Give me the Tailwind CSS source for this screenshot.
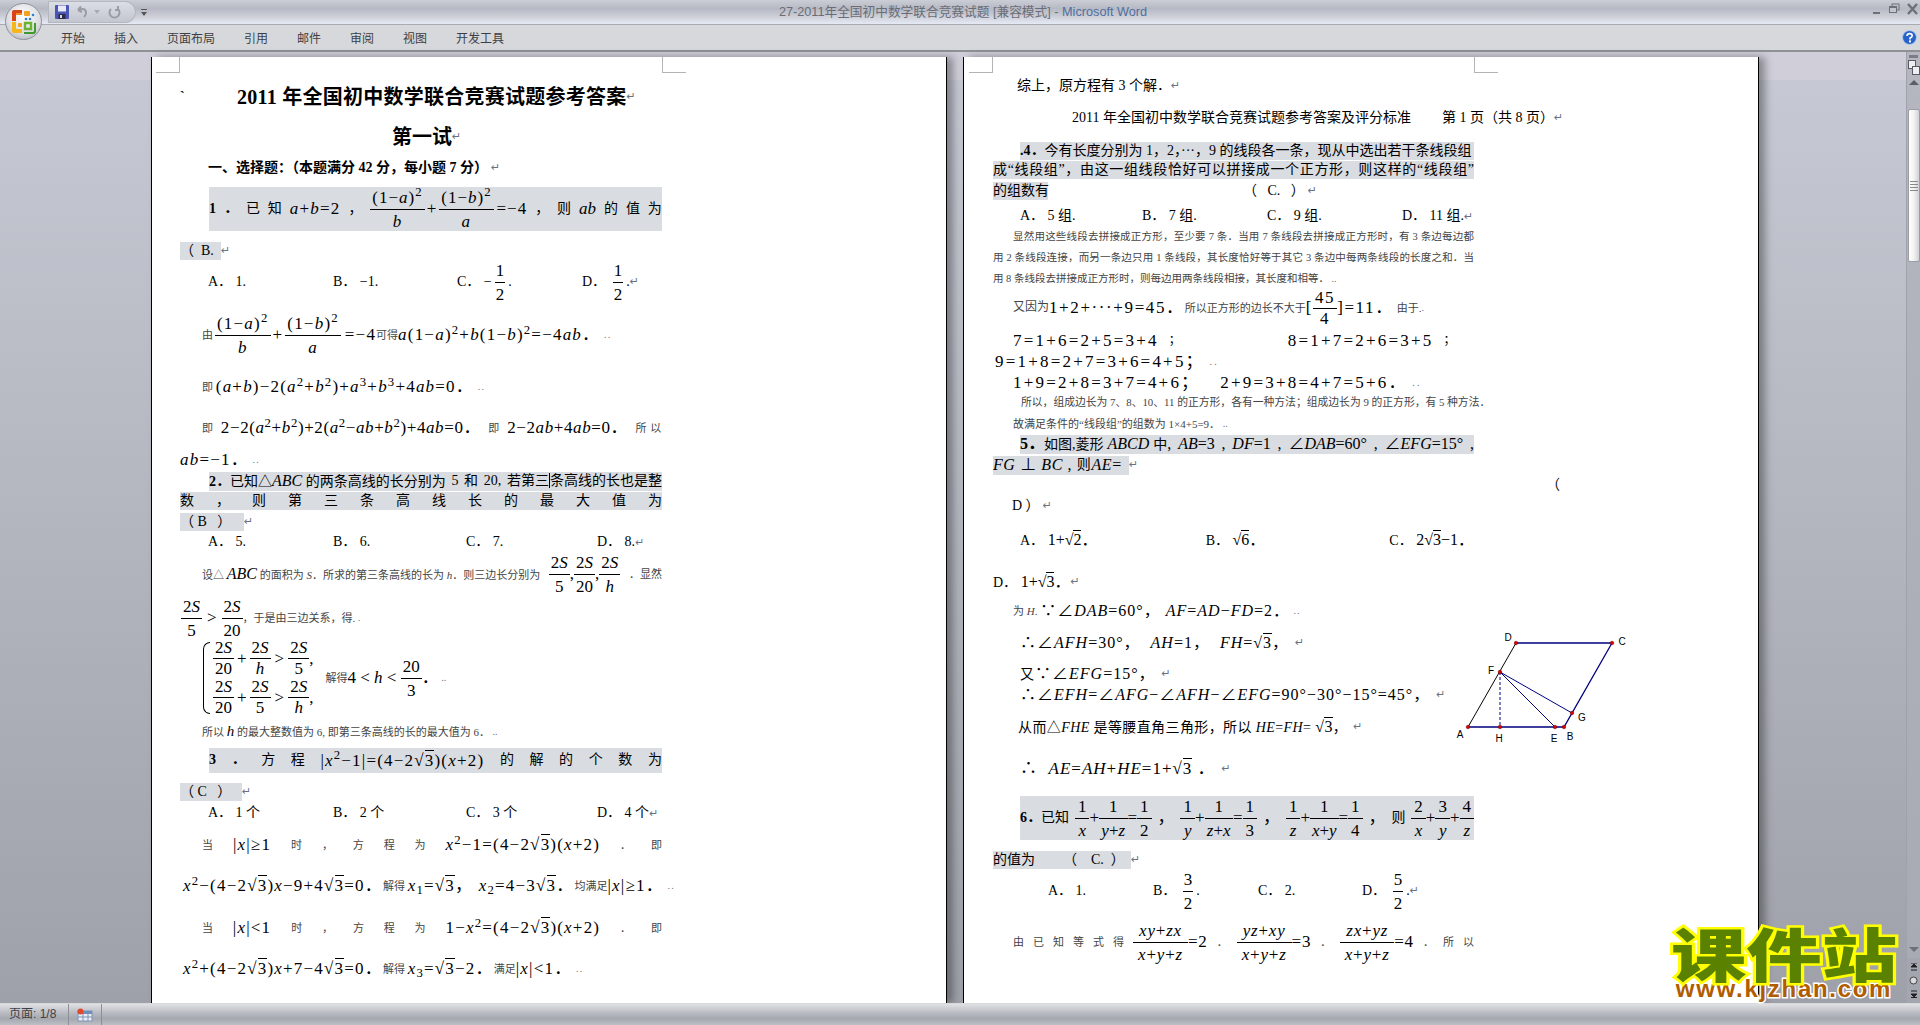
<!doctype html>
<html lang="zh-CN">
<head>
<meta charset="utf-8">
<title>27-2011年全国初中数学联合竞赛试题 [兼容模式] - Microsoft Word</title>
<script src="https://cdn.jsdelivr.net/npm/@tailwindcss/browser@4"></script>
</head>
<body class="relative w-[1920px] h-[1025px] overflow-hidden flex flex-col text-black leading-[1.15] font-['Liberation_Serif','Noto_Sans_CJK_SC',serif]">

<!-- Title bar -->
<header class="relative shrink-0 h-[25px] border-b border-[#a8abb3] flex items-center justify-center bg-[linear-gradient(#ccced6,#b6b9c3_35%,#c9ccd5_65%,#e6eaf4)] font-['Liberation_Sans','Noto_Sans_CJK_SC',sans-serif] text-[12.7px] text-[#6a6d76]">
  <span class="whitespace-pre ml-[6px]">27-2011年全国初中数学联合竞赛试题 [兼容模式] - <span class="text-[#4f6f9f]">Microsoft Word</span></span>
  <!-- quick access toolbar -->
  <div class="absolute left-[48px] top-[1px] w-[88px] h-[22px] rounded-r-full rounded-l-[8px] border border-[#b4b7c0] bg-[linear-gradient(#dcdee5,#c3c6cf)] flex items-center gap-[8px] pl-[6px]">
    <svg width="14" height="14" viewBox="0 0 14 14"><rect width="14" height="14" rx="1" fill="#4a55b8"/><rect x="3" y="0.5" width="8" height="6" fill="#e8e9f4"/><rect x="3.5" y="9" width="7" height="5" fill="#2c2c46"/><rect x="5" y="10" width="2" height="3" fill="#d8d8e4"/></svg>
    <svg width="12" height="14" viewBox="0 0 12 14"><path d="M1 5 L4 1.5 M1 5 L5 7 M1.5 5 Q9 2 9 8 Q9 10 7 12" fill="none" stroke="#9a9da6" stroke-width="2"/></svg>
    <svg width="6" height="4" viewBox="0 0 6 4" class="-ml-[3px]"><path d="M0 0H6L3 4Z" fill="#a7aab3"/></svg>
    <svg width="13" height="14" viewBox="0 0 13 14"><path d="M3 4 A5 5 0 1 0 10 4 M10 1 V5 H7" fill="none" stroke="#9a9da6" stroke-width="2"/></svg>
  </div>
  <svg class="absolute left-[141px] top-[9px]" width="6" height="7" viewBox="0 0 6 7"><rect width="6" height="1" fill="#555"/><path d="M0 3H6L3 7Z" fill="#555"/></svg>
  <!-- window buttons -->
  <div class="absolute right-[2px] top-[3px] flex items-start gap-[7px]">
    <svg width="11" height="12" viewBox="0 0 11 12"><rect x="2" y="9" width="7" height="2" fill="#6c7079"/></svg>
    <svg width="11" height="12" viewBox="0 0 11 12"><rect x="3" y="1" width="7" height="6" fill="none" stroke="#6c7079"/><rect x="0.5" y="3.5" width="7" height="6" fill="#c3c6cf" stroke="#6c7079"/><rect x="1" y="3" width="6" height="2" fill="#6c7079"/></svg>
    <svg width="11" height="12" viewBox="0 0 11 12"><path d="M1 1 L10 11 M10 1 L1 11" stroke="#6c7079" stroke-width="2.4"/></svg>
  </div>
</header>

<!-- Ribbon tabs -->
<nav class="relative shrink-0 h-[27px] border-b-2 border-[#8e9196] bg-[#d6d8db] flex items-center gap-[29px] pl-[61px] font-['Noto_Sans_CJK_SC',sans-serif] text-[12px] text-[#3d3f44]">
  <span>开始</span><span>插入</span><span>页面布局</span><span>引用</span><span>邮件</span><span>审阅</span><span>视图</span><span>开发工具</span>
  <svg class="absolute left-[1902px] top-[5px]" width="15" height="15" viewBox="0 0 15 15"><circle cx="7.5" cy="7.5" r="7" fill="#2a63c8" stroke="#b9cdf0"/><path d="M5 6 Q5 3.6 7.6 3.6 Q10.2 3.6 10.2 5.7 Q10.2 7 8 8 V9.4" fill="none" stroke="#fff" stroke-width="1.6"/><rect x="7" y="10.4" width="2" height="2" fill="#fff"/></svg>
</nav>

<!-- Office button -->
<div class="absolute left-[5px] top-[3px] w-[37px] h-[37px] rounded-full border border-[#8f9299] bg-[radial-gradient(circle_at_50%_35%,#ffffff,#d9dbe0_60%,#a3a6ae)] flex items-center justify-center">
  <svg width="25" height="25" viewBox="0 0 25 25">
    <path d="M1 3 Q1 1 3 1 H11 V5 H5 V12 H1Z" fill="#d9431a"/>
    <rect x="5" y="4" width="6" height="2" fill="#f28b1e"/>
    <rect x="13" y="2" width="6" height="5" rx="1" fill="#f3a21f"/>
    <circle cx="15" cy="10" r="1.3" fill="#2c7ed0"/><circle cx="19" cy="10" r="1.3" fill="#2c7ed0"/><circle cx="22" cy="6" r="1.3" fill="#2c7ed0"/>
    <path d="M1 13 H5 V20 H11 V24 H3 Q1 24 1 22Z" fill="#f4b619"/>
    <rect x="7" y="14" width="4" height="4" rx="1" fill="#f6a11d"/>
    <path d="M14 14 H20 V20 H14Z" fill="none" stroke="#6bb22f" stroke-width="2.4"/>
    <path d="M13 24 H22 Q24 24 24 22 V14" fill="none" stroke="#3f9a2e" stroke-width="2"/>
  </svg>
</div>

<!-- Document area -->
<main class="relative flex-1 min-h-0 flex gap-[16px] pl-[151px] bg-[linear-gradient(#d0ced9_28px,#c6c9d3_28px,#9ea1a9)]">

  <!-- Page 1 -->
  <section class="relative mt-[5px] w-[796px] h-[946px] shrink-0 overflow-hidden bg-white border-x border-black shadow-[6px_0_8px_rgba(0,0,0,0.35)] pt-[20px] pl-[28px] pr-[284px] text-[14px]">
    <div class="absolute left-[4px] top-0 w-[24px] h-[16px] border-r border-b border-[#b4b4b4]"></div>
    <div class="absolute left-[510px] top-0 w-[24px] h-[16px] border-l border-b border-[#b4b4b4]"></div>

    <div class="flex items-center h-[40px] whitespace-pre text-[20px] font-bold"><span class="w-[57px] text-[14px]">`</span><span class="tracking-[0.25px]">2011 年全国初中数学联合竞赛试题参考答案</span><i class="not-italic font-normal text-[11px] text-gray-500 font-['DejaVu_Sans']">↵</i></div>
    <div class="flex items-center h-[40px] pl-[212px] whitespace-pre text-[20px] font-bold"><span>第一试</span><i class="not-italic font-normal text-[11px] text-gray-500 font-['DejaVu_Sans']">↵</i></div>
    <div class="flex items-center h-[22px] pl-[28px] whitespace-pre font-bold"><span>一、选择题：（本题满分 42 分，每小题 7 分）</span><i class="not-italic font-normal text-[11px] text-gray-500 font-['DejaVu_Sans'] ml-[3px]">↵</i></div>

    <div class="ml-[29px] mt-[8px] h-[44px] bg-[#d9dce1] flex items-center justify-between whitespace-pre">
      <b>1</b><b>．</b><span>已</span><span>知</span><span class="text-[17px] tracking-[1.2px]"><em>a</em>+<em>b</em>=2</span><span>，</span>
      <span class="flex items-center text-[17px] tracking-[1px]"><span class="inline-flex flex-col items-center"><span class="border-b border-black px-[2px] leading-[23px]">(1−<em>a</em>)<sup>2</sup></span><span class="leading-[23px]"><em>b</em></span></span><span class="mx-[2px]">+</span><span class="inline-flex flex-col items-center"><span class="border-b border-black px-[2px] leading-[23px]">(1−<em>b</em>)<sup>2</sup></span><span class="leading-[23px]"><em>a</em></span></span><span class="ml-[3px]">=−4</span></span>
      <span>，</span><span>则</span><span class="text-[17px]"><em>ab</em></span><span>的</span><span>值</span><span>为</span>
    </div>
    <div class="mt-[11px] h-[18px] flex items-center whitespace-pre"><span class="h-[18px] w-[41px] bg-[#d9dce1] flex items-center">（  B.</span><i class="not-italic text-[11px] text-gray-500 font-['DejaVu_Sans']">↵</i></div>

    <div class="h-[44px] pl-[28px] flex items-center whitespace-pre">
      <span class="w-[125px]">A． 1.</span><span class="w-[124px]">B． −1.</span>
      <span class="w-[125px] flex items-center">C． −<span class="inline-flex flex-col items-center text-[17px] mx-[3px]"><span class="border-b border-black px-[1px] leading-[23px]">1</span><span class="leading-[23px]">2</span></span>.</span>
      <span class="flex items-center">D． <span class="inline-flex flex-col items-center text-[17px] mx-[3px]"><span class="border-b border-black px-[1px] leading-[23px]">1</span><span class="leading-[23px]">2</span></span>.<i class="not-italic text-[11px] text-gray-500 font-['DejaVu_Sans']">↵</i></span>
    </div>

    <div class="mt-[9px] h-[44px] pl-[22px] flex items-center whitespace-pre text-[17px] tracking-[1.2px]">
      <span class="text-[11px] text-[#444] tracking-normal">由</span>
      <span class="inline-flex flex-col items-center ml-[2px]"><span class="border-b border-black px-[2px] leading-[23px]">(1−<em>a</em>)<sup>2</sup></span><span class="leading-[23px]"><em>b</em></span></span><span class="mx-[2px]">+</span><span class="inline-flex flex-col items-center"><span class="border-b border-black px-[2px] leading-[23px]">(1−<em>b</em>)<sup>2</sup></span><span class="leading-[23px]"><em>a</em></span></span>
      <span class="ml-[4px]">=−4</span><span class="text-[11px] text-[#444] tracking-normal">可得</span><span><em>a</em>(1−<em>a</em>)<sup>2</sup>+<em>b</em>(1−<em>b</em>)<sup>2</sup>=−4<em>ab</em>．</span><span class="text-[10px] text-gray-500"> ..</span>
    </div>

    <div class="mt-[10px] h-[40px] pl-[22px] flex items-center whitespace-pre text-[17px] tracking-[1.2px]"><span class="text-[11px] text-[#444] tracking-normal">即 </span><span>(<em>a</em>+<em>b</em>)−2(<em>a</em><sup>2</sup>+<em>b</em><sup>2</sup>)+<em>a</em><sup>3</sup>+<em>b</em><sup>3</sup>+4<em>ab</em>=0．</span><span class="text-[10px] text-gray-500"> ..</span></div>

    <div class="mt-[1px] h-[40px] pl-[22px] flex items-center justify-between whitespace-pre text-[17px] tracking-[0.6px]"><span class="text-[11px] text-[#444]">即</span><span>2−2(<em>a</em><sup>2</sup>+<em>b</em><sup>2</sup>)+2(<em>a</em><sup>2</sup>−<em>ab</em>+<em>b</em><sup>2</sup>)+4<em>ab</em>=0．</span><span class="text-[11px] text-[#444]">即</span><span>2−2<em>ab</em>+4<em>ab</em>=0．</span><span class="text-[11px] text-[#444]">所 以</span></div>

    <div class="h-[24px] flex items-center whitespace-pre text-[17px] tracking-[1.2px]"><span><em>ab</em>=−1．</span><span class="text-[10px] text-gray-500"> ..</span></div>

    <div class="ml-[29px] h-[19px] bg-[#d9dce1] flex items-center justify-between whitespace-pre"><span><b>2</b><b>．</b>已知△<em class="text-[16px]">ABC</em> 的两条高线的长分别为</span><span>5</span><span>和</span><span>20,</span><span>若第三<span class="border-l border-black">条</span>高线的长也是整</span></div>
    <div class="mt-[1px] h-[18px] bg-[#d9dce1] flex items-center justify-between"><span>数</span><span>，</span><span>则</span><span>第</span><span>三</span><span>条</span><span>高</span><span>线</span><span>长</span><span>的</span><span>最</span><span>大</span><span>值</span><span>为</span></div>
    <div class="mt-[3px] h-[18px] flex items-center whitespace-pre"><span class="h-[18px] w-[64px] bg-[#d9dce1] flex items-center">（ B   ）</span><i class="not-italic text-[11px] text-gray-500 font-['DejaVu_Sans']">↵</i></div>
    <div class="mt-[2px] h-[18px] pl-[28px] flex items-center whitespace-pre"><span class="w-[125px]">A． 5.</span><span class="w-[133px]">B． 6.</span><span class="w-[131px]">C． 7.</span><span>D． 8.<i class="not-italic text-[11px] text-gray-500 font-['DejaVu_Sans']">↵</i></span></div>

    <div class="mt-[1px] h-[44px] pl-[22px] flex items-center justify-between whitespace-pre text-[11px] text-[#444]">
      <span>设△ <em class="text-[16px] text-black">ABC</em> 的面积为 <em>S</em>．所求的第三条高线的长为 <em>h</em>．则三边长分别为</span>
      <span class="flex items-center text-[17px] text-black"><span class="inline-flex flex-col items-center"><span class="border-b border-black px-[2px] leading-[23px]">2<em>S</em></span><span class="leading-[23px]">5</span></span>,<span class="inline-flex flex-col items-center"><span class="border-b border-black px-[2px] leading-[23px]">2<em>S</em></span><span class="leading-[23px]">20</span></span>,<span class="inline-flex flex-col items-center"><span class="border-b border-black px-[2px] leading-[23px]">2<em>S</em></span><span class="leading-[23px]"><em>h</em></span></span></span>
      <span>．显然</span>
    </div>
    <div class="h-[44px] pl-[1px] flex items-center whitespace-pre text-[17px]"><span class="inline-flex flex-col items-center"><span class="border-b border-black px-[2px] leading-[23px]">2<em>S</em></span><span class="leading-[23px]">5</span></span><span class="mx-[5px]">&gt;</span><span class="inline-flex flex-col items-center"><span class="border-b border-black px-[2px] leading-[23px]">2<em>S</em></span><span class="leading-[23px]">20</span></span><span class="text-[11px] text-[#444]">，于是由三边关系，得.</span><span class="text-[10px] text-gray-500"> .</span></div>

    <div class="h-[76px] pl-[23px] flex items-center whitespace-pre text-[17px]">
      <span class="w-[7px] h-[72px] mr-[3px] border-l border-y border-black rounded-l-[7px]"></span>
      <span class="flex flex-col">
        <span class="flex items-center h-[39px]"><span class="inline-flex flex-col items-center"><span class="border-b border-black px-[2px] leading-[20px]">2<em>S</em></span><span class="leading-[20px]">20</span></span><span class="mx-[3px]">+</span><span class="inline-flex flex-col items-center"><span class="border-b border-black px-[2px] leading-[20px]">2<em>S</em></span><span class="leading-[20px]"><em>h</em></span></span><span class="mx-[4px]">&gt;</span><span class="inline-flex flex-col items-center"><span class="border-b border-black px-[2px] leading-[20px]">2<em>S</em></span><span class="leading-[20px]">5</span></span>,</span>
        <span class="flex items-center h-[39px]"><span class="inline-flex flex-col items-center"><span class="border-b border-black px-[2px] leading-[20px]">2<em>S</em></span><span class="leading-[20px]">20</span></span><span class="mx-[3px]">+</span><span class="inline-flex flex-col items-center"><span class="border-b border-black px-[2px] leading-[20px]">2<em>S</em></span><span class="leading-[20px]">5</span></span><span class="mx-[4px]">&gt;</span><span class="inline-flex flex-col items-center"><span class="border-b border-black px-[2px] leading-[20px]">2<em>S</em></span><span class="leading-[20px]"><em>h</em></span></span>,</span>
      </span>
      <span class="ml-[12px] text-[11px] text-[#444]">解得</span><span>4 &lt; <em>h</em> &lt; </span><span class="inline-flex flex-col items-center"><span class="border-b border-black px-[2px] leading-[23px]">20</span><span class="leading-[23px]">3</span></span><span>．</span><span class="text-[10px] text-gray-500"> ..</span>
    </div>

    <div class="mt-[6px] h-[20px] pl-[22px] flex items-center whitespace-pre text-[11px] text-[#444]"><span>所以 <em class="text-[15px] text-black">h</em> 的最大整数值为 6, 即第三条高线的长的最大值为 6．</span><span class="text-[10px] text-gray-500"> ..</span></div>

    <div class="ml-[29px] mt-[6px] h-[25px] bg-[#d9dce1] flex items-center justify-between whitespace-pre"><b>3</b><b>．</b><span>方</span><span>程</span><span class="text-[17px] tracking-[1.2px]">|<em>x</em><sup>2</sup>−1|=(4−2√<span class="border-t border-black">3</span>)(<em>x</em>+2)</span><span>的</span><span>解</span><span>的</span><span>个</span><span>数</span><span>为</span></div>
    <div class="mt-[10px] h-[18px] flex items-center whitespace-pre"><span class="h-[18px] w-[62px] bg-[#d9dce1] flex items-center">（ C   ）</span><i class="not-italic text-[11px] text-gray-500 font-['DejaVu_Sans']">↵</i></div>
    <div class="mt-[2px] h-[20px] pl-[28px] flex items-center whitespace-pre"><span class="w-[125px]">A． 1 个</span><span class="w-[133px]">B． 2 个</span><span class="w-[131px]">C． 3 个</span><span>D． 4 个<i class="not-italic text-[11px] text-gray-500 font-['DejaVu_Sans']">↵</i></span></div>

    <div class="mt-[12px] h-[20px] pl-[22px] flex items-center justify-between whitespace-pre text-[11px] text-[#444]"><span>当</span><span class="text-[17px] text-black tracking-[1.2px]">|<em>x</em>|≥1</span><span>时</span><span>，</span><span>方</span><span>程</span><span>为</span><span class="text-[17px] text-black tracking-[1.2px]"><em>x</em><sup>2</sup>−1=(4−2√<span class="border-t border-black">3</span>)(<em>x</em>+2)</span><span>．</span><span>即</span></div>
    <div class="mt-[11px] h-[40px] pl-[3px] flex items-center whitespace-pre text-[17px] tracking-[1.2px]"><span><em>x</em><sup>2</sup>−(4−2√<span class="border-t border-black">3</span>)<em>x</em>−9+4√<span class="border-t border-black">3</span>=0．</span><span class="text-[11px] text-[#444] tracking-normal">解得 </span><span><em>x</em><sub>1</sub>=√<span class="border-t border-black">3</span>， <em>x</em><sub>2</sub>=4−3√<span class="border-t border-black">3</span>．</span><span class="text-[11px] text-[#444] tracking-normal">均满足</span><span>|<em>x</em>|≥1．</span><span class="text-[10px] text-gray-500"> ..</span></div>
    <div class="mt-[2px] h-[40px] pl-[22px] flex items-center justify-between whitespace-pre text-[11px] text-[#444]"><span>当</span><span class="text-[17px] text-black tracking-[1.2px]">|<em>x</em>|&lt;1</span><span>时</span><span>，</span><span>方</span><span>程</span><span>为</span><span class="text-[17px] text-black tracking-[1.2px]">1−<em>x</em><sup>2</sup>=(4−2√<span class="border-t border-black">3</span>)(<em>x</em>+2)</span><span>．</span><span>即</span></div>
    <div class="mt-[1px] h-[40px] pl-[3px] flex items-center whitespace-pre text-[17px] tracking-[1.2px]"><span><em>x</em><sup>2</sup>+(4−2√<span class="border-t border-black">3</span>)<em>x</em>+7−4√<span class="border-t border-black">3</span>=0．</span><span class="text-[11px] text-[#444] tracking-normal">解得 </span><span><em>x</em><sub>3</sub>=√<span class="border-t border-black">3</span>−2．</span><span class="text-[11px] text-[#444] tracking-normal">满足</span><span>|<em>x</em>|&lt;1．</span><span class="text-[10px] text-gray-500"> ..</span></div>
  </section>

  <!-- Page 2 -->
  <section class="relative mt-[5px] w-[796px] h-[946px] shrink-0 overflow-hidden bg-white border-x border-black shadow-[6px_0_8px_rgba(0,0,0,0.35)] pt-[19px] pl-[29px] pr-[284px] text-[14px]">
    <div class="absolute left-[5px] top-0 w-[24px] h-[16px] border-r border-b border-[#b4b4b4]"></div>
    <div class="absolute left-[510px] top-0 w-[24px] h-[16px] border-l border-b border-[#b4b4b4]"></div>

    <!-- Geometry figure -->
    <svg class="absolute left-[487px] top-[573px]" width="190" height="115" viewBox="0 0 190 115" font-family="Liberation Sans, sans-serif" font-size="10" text-anchor="middle">
      <path d="M17 97 L65 13" stroke="#000" fill="none"/>
      <path d="M65 13 H161 L113 97 H17" stroke="#00007f" stroke-width="1.3" fill="none"/>
      <path d="M49 42 L104 97 M49 42 L121 83" stroke="#00007f" fill="none"/>
      <path d="M49 42 V97" stroke="#00007f" stroke-dasharray="3 2" fill="none"/>
      <g fill="#e00000" stroke="#5a0000" stroke-width="0.5"><circle cx="65" cy="13" r="1.8"/><circle cx="161" cy="13" r="1.8"/><circle cx="49" cy="42" r="1.8"/><circle cx="17" cy="97" r="1.8"/><circle cx="49" cy="97" r="1.8"/><circle cx="104" cy="97" r="1.8"/><circle cx="113" cy="97" r="1.8"/><circle cx="121" cy="83" r="1.8"/></g>
      <text x="57" y="11">D</text><text x="171" y="15">C</text><text x="40" y="44">F</text><text x="9" y="108">A</text><text x="48" y="112">H</text><text x="103" y="112">E</text><text x="119" y="110">B</text><text x="131" y="91">G</text>
    </svg>

    <div class="h-[20px] pl-[24px] flex items-center whitespace-pre"><span>综上，原方程有 3 个解．</span><i class="not-italic text-[11px] text-gray-500 font-['DejaVu_Sans']">↵</i></div>
    <div class="mt-[12px] h-[20px] pl-[79px] flex items-center whitespace-pre w-[600px]"><span>2011 年全国初中数学联合竞赛试题参考答案及评分标准</span><span class="ml-[31px]">第 1 页（共 8 页）</span><i class="not-italic text-[11px] text-gray-500 font-['DejaVu_Sans']">↵</i></div>

    <div class="ml-[27px] mt-[14px] h-[18px] bg-[#d9dce1] flex items-center justify-between whitespace-pre"><span><b>.4．</b>今有长度分别为 1，2，···，9 的线段各一条，现从中选出若干条线段组</span></div>
    <div class="mt-[1px] h-[18px] bg-[#d9dce1] leading-[18px] [text-align-last:justify]">成“线段组”，由这一组线段恰好可以拼接成一个正方形，则这样的“线段组”</div>
    <div class="mt-[3px] h-[18px] flex items-center whitespace-pre"><span class="h-[18px] w-[55px] bg-[#d9dce1] flex items-center">的组数有</span><span class="ml-[195px]">（   C.   ）</span><i class="not-italic text-[11px] text-gray-500 font-['DejaVu_Sans'] ml-[3px]">↵</i></div>
    <div class="mt-[6px] h-[20px] pl-[27px] flex items-center whitespace-pre"><span class="w-[122px]">A． 5 组.</span><span class="w-[125px]">B． 7 组.</span><span class="w-[135px]">C． 9 组.</span><span>D． 11 组.<i class="not-italic text-[11px] text-gray-500 font-['DejaVu_Sans']">↵</i></span></div>

    <div class="h-[21px] ml-[20px] leading-[21px] text-[10.5px] text-[#444] [text-align-last:justify]">显然用这些线段去拼接成正方形，至少要 7 条．当用 7 条线段去拼接成正方形时，有 3 条边每边都</div>
    <div class="h-[21px] leading-[21px] text-[10.5px] text-[#444] [text-align-last:justify]">用 2 条线段连接，而另一条边只用 1 条线段，其长度恰好等于其它 3 条边中每两条线段的长度之和．当</div>
    <div class="h-[21px] leading-[21px] text-[10.5px] text-[#444] whitespace-pre">用 8 条线段去拼接成正方形时，则每边用两条线段相接，其长度和相等．<span class="text-[10px] text-gray-500"> ..</span></div>

    <div class="h-[38px] pl-[20px] flex items-center whitespace-pre text-[17px] tracking-[1.6px]"><span class="text-[12px] text-[#444] tracking-normal">又因为</span><span>1+2+···+9=45．</span><span class="text-[11px] text-[#444] tracking-normal">所以正方形的边长不大于</span><span>[</span><span class="inline-flex flex-col items-center"><span class="border-b border-black px-[2px] leading-[20px]">45</span><span class="leading-[20px]">4</span></span><span>]=11．</span><span class="text-[11px] text-[#444] ml-[3px] tracking-normal">由于.</span><span class="text-[10px] text-gray-500">.</span></div>

    <div class="mt-[4px] h-[20px] pl-[20px] flex items-center whitespace-pre text-[17px] tracking-[2.2px]"><span>7=1+6=2+5=3+4</span><span class="ml-[10px] text-[12px]">；</span><span class="ml-[105px]">8=1+7=2+6=3+5</span><span class="ml-[10px] text-[12px]">；</span></div>
    <div class="mt-[1px] h-[20px] pl-[2px] flex items-center whitespace-pre text-[17px] tracking-[2.2px]"><span>9=1+8=2+7=3+6=4+5；</span><span class="text-[10px] text-gray-500"> ..</span></div>
    <div class="mt-[1px] h-[20px] pl-[20px] flex items-center whitespace-pre text-[17px] tracking-[2.2px]"><span>1+9=2+8=3+7=4+6；</span><span class="ml-[20px]">2+9=3+8=4+7=5+6．</span><span class="text-[10px] text-gray-500"> ..</span></div>
    <div class="h-[18px] pl-[28px] flex items-center whitespace-pre text-[10.8px] text-[#444]"><span>所以，组成边长为 7、8、10、11 的正方形，各有一种方法；组成边长为 9 的正方形，有 5 种方法．</span></div>
    <div class="mt-[4px] h-[18px] pl-[20px] flex items-center whitespace-pre text-[11px] text-[#444]"><span>故满足条件的“线段组”的组数为 1×4+5=9．</span><span class="text-[10px] text-gray-500"> ..</span></div>

    <div class="ml-[27px] mt-[2px] h-[19px] bg-[#d9dce1] flex items-center justify-between whitespace-pre text-[16px]"><span><b>5．</b><span class="text-[14px]">如图,菱形</span> <em>ABCD</em> <span class="text-[14px]">中</span>,</span><span><em>AB</em>=3</span><span>,</span><span><em>DF</em>=1</span><span>,</span><span>∠<em>DAB</em>=60°</span><span>,</span><span>∠<em>EFG</em>=15°</span><span>,</span></div>
    <div class="mt-[2px] h-[19px] flex items-center whitespace-pre text-[16px]"><span class="h-[19px] w-[136px] bg-[#d9dce1] flex items-center tracking-[0.6px]"><em>FG</em> ⊥ <em>BC</em> , <span class="text-[14px]">则</span> <em>AE</em>=</span><i class="not-italic text-[11px] text-gray-500 font-['DejaVu_Sans']">↵</i></div>
    <div class="mt-[1px] h-[18px] w-[600px] pl-[553px] flex items-center">（</div>
    <div class="mt-[2px] h-[20px] pl-[19px] flex items-center whitespace-pre"><span>D ）</span><i class="not-italic text-[11px] text-gray-500 font-['DejaVu_Sans'] ml-[3px]">↵</i></div>

    <div class="mt-[9px] h-[30px] pl-[27px] flex items-center whitespace-pre"><span class="w-[186px]">A． <span class="text-[16px]">1+√<span class="border-t border-black">2</span>．</span></span><span class="w-[184px]">B． <span class="text-[16px]">√<span class="border-t border-black">6</span>．</span></span><span>C． <span class="text-[16px]">2√<span class="border-t border-black">3</span>−1．</span></span></div>
    <div class="mt-[12px] h-[30px] flex items-center whitespace-pre"><span>D． <span class="text-[16px]">1+√<span class="border-t border-black">3</span>．</span></span><i class="not-italic text-[11px] text-gray-500 font-['DejaVu_Sans']">↵</i></div>

    <div class="mt-[4px] h-[20px] pl-[20px] flex items-center whitespace-pre text-[16px] tracking-[1px]"><span class="text-[11px] text-[#444] tracking-normal">为 <em>H</em>. </span><span>∵∠<em>DAB</em>=60°， <em>AF</em>=<em>AD</em>−<em>FD</em>=2．</span><span class="text-[10px] text-gray-500"> ..</span></div>
    <div class="mt-[7px] h-[30px] pl-[27px] flex items-center whitespace-pre text-[16px] tracking-[1px]"><span>∴∠<em>AFH</em>=30°，  <em>AH</em>=1，  <em>FH</em>=√<span class="border-t border-black">3</span>，</span><i class="not-italic text-[11px] text-gray-500 font-['DejaVu_Sans'] ml-[6px]">↵</i></div>
    <div class="mt-[6px] h-[20px] pl-[27px] flex items-center whitespace-pre text-[16px] tracking-[1px]"><span><span class="text-[14px]">又</span>∵∠<em>EFG</em>=15°，</span><i class="not-italic text-[11px] text-gray-500 font-['DejaVu_Sans'] ml-[6px]">↵</i></div>
    <div class="mt-[1px] h-[20px] pl-[27px] flex items-center whitespace-pre text-[16px] tracking-[1px]"><span>∴∠<em>EFH</em>=∠<em>AFG</em>−∠<em>AFH</em>−∠<em>EFG</em>=90°−30°−15°=45°，</span><i class="not-italic text-[11px] text-gray-500 font-['DejaVu_Sans'] ml-[6px]">↵</i></div>
    <div class="mt-[7px] h-[30px] pl-[25px] flex items-center whitespace-pre text-[14px]"><span class="tracking-[0.4px]">从而△<em>FHE</em> 是等腰直角三角形，所以 <em>HE</em>=<em>FH</em>= <span class="text-[16px]">√<span class="border-t border-black">3</span></span>，</span><i class="not-italic text-[11px] text-gray-500 font-['DejaVu_Sans'] ml-[6px]">↵</i></div>
    <div class="mt-[12px] h-[30px] pl-[27px] flex items-center whitespace-pre text-[17px] tracking-[1px]"><span>∴  <em>AE</em>=<em>AH</em>+<em>HE</em>=1+√<span class="border-t border-black">3</span> ．</span><i class="not-italic text-[11px] text-gray-500 font-['DejaVu_Sans'] ml-[6px]">↵</i></div>

    <div class="ml-[27px] mt-[12px] h-[44px] bg-[#d9dce1] flex items-center justify-between whitespace-pre text-[17px]">
      <span class="text-[14px]"><b>6．</b>已知</span>
      <span class="flex items-center"><span class="inline-flex flex-col items-center"><span class="border-b border-black px-[3px] leading-[23px]">1</span><span class="leading-[23px]"><em>x</em></span></span>+<span class="inline-flex flex-col items-center"><span class="border-b border-black px-[10px] leading-[23px]">1</span><span class="leading-[23px]"><em>y</em>+<em>z</em></span></span>=<span class="inline-flex flex-col items-center"><span class="border-b border-black px-[3px] leading-[23px]">1</span><span class="leading-[23px]">2</span></span></span><span>，</span>
      <span class="flex items-center"><span class="inline-flex flex-col items-center"><span class="border-b border-black px-[3px] leading-[23px]">1</span><span class="leading-[23px]"><em>y</em></span></span>+<span class="inline-flex flex-col items-center"><span class="border-b border-black px-[10px] leading-[23px]">1</span><span class="leading-[23px]"><em>z</em>+<em>x</em></span></span>=<span class="inline-flex flex-col items-center"><span class="border-b border-black px-[3px] leading-[23px]">1</span><span class="leading-[23px]">3</span></span></span><span>，</span>
      <span class="flex items-center"><span class="inline-flex flex-col items-center"><span class="border-b border-black px-[3px] leading-[23px]">1</span><span class="leading-[23px]"><em>z</em></span></span>+<span class="inline-flex flex-col items-center"><span class="border-b border-black px-[10px] leading-[23px]">1</span><span class="leading-[23px]"><em>x</em>+<em>y</em></span></span>=<span class="inline-flex flex-col items-center"><span class="border-b border-black px-[3px] leading-[23px]">1</span><span class="leading-[23px]">4</span></span></span><span>，</span>
      <span class="text-[14px]">则</span>
      <span class="flex items-center"><span class="inline-flex flex-col items-center"><span class="border-b border-black px-[3px] leading-[23px]">2</span><span class="leading-[23px]"><em>x</em></span></span>+<span class="inline-flex flex-col items-center"><span class="border-b border-black px-[3px] leading-[23px]">3</span><span class="leading-[23px]"><em>y</em></span></span>+<span class="inline-flex flex-col items-center"><span class="border-b border-black px-[3px] leading-[23px]">4</span><span class="leading-[23px]"><em>z</em></span></span></span>
    </div>
    <div class="mt-[11px] h-[18px] flex items-center whitespace-pre"><span class="h-[18px] w-[138px] bg-[#d9dce1] flex items-center">的值为        （    C.  ）</span><i class="not-italic text-[11px] text-gray-500 font-['DejaVu_Sans']">↵</i></div>
    <div class="h-[44px] pl-[55px] flex items-center whitespace-pre"><span class="w-[105px]">A． 1.</span><span class="w-[105px] flex items-center">B． <span class="inline-flex flex-col items-center text-[17px] mx-[3px]"><span class="border-b border-black px-[1px] leading-[23px]">3</span><span class="leading-[23px]">2</span></span>.</span><span class="w-[104px]">C． 2.</span><span class="flex items-center">D． <span class="inline-flex flex-col items-center text-[17px] mx-[3px]"><span class="border-b border-black px-[1px] leading-[23px]">5</span><span class="leading-[23px]">2</span></span>.<i class="not-italic text-[11px] text-gray-500 font-['DejaVu_Sans']">↵</i></span></div>

    <div class="mt-[7px] h-[44px] pl-[20px] flex items-center justify-between whitespace-pre text-[11px] text-[#444]">
      <span>由</span><span>已</span><span>知</span><span>等</span><span>式</span><span>得</span>
      <span class="flex items-center text-[17px] text-black tracking-[0.8px]"><span class="inline-flex flex-col items-center"><span class="border-b border-black px-[6px] leading-[23px]"><em>xy</em>+<em>zx</em></span><span class="leading-[23px]"><em>x</em>+<em>y</em>+<em>z</em></span></span>=2</span><span>．</span>
      <span class="flex items-center text-[17px] text-black tracking-[0.8px]"><span class="inline-flex flex-col items-center"><span class="border-b border-black px-[6px] leading-[23px]"><em>yz</em>+<em>xy</em></span><span class="leading-[23px]"><em>x</em>+<em>y</em>+<em>z</em></span></span>=3</span><span>．</span>
      <span class="flex items-center text-[17px] text-black tracking-[0.8px]"><span class="inline-flex flex-col items-center"><span class="border-b border-black px-[6px] leading-[23px]"><em>zx</em>+<em>yz</em></span><span class="leading-[23px]"><em>x</em>+<em>y</em>+<em>z</em></span></span>=4</span><span>．</span>
      <span>所</span><span>以</span>
    </div>
  </section>

  <!-- Vertical scrollbar -->
  <aside class="absolute right-0 top-0 bottom-0 w-[14px] flex flex-col items-center border-l border-[#9fa2aa] bg-[linear-gradient(#b4b7c0,#a7aab3)]">
    <div class="mt-[3px] w-[9px] h-[3px] bg-[#7a7d85]"></div>
    <svg class="mt-[2px]" width="12" height="15" viewBox="0 0 12 15"><rect x="0.5" y="0.5" width="7" height="8" fill="#eceef2" stroke="#555a63"/><rect x="4.5" y="6.5" width="7" height="8" fill="#eceef2" stroke="#555a63"/></svg>
    <svg class="mt-[5px]" width="10" height="5" viewBox="0 0 10 5"><path d="M0 5H10L5 0Z" fill="#5b5e67"/></svg>
    <div class="mt-[24px] w-[12px] h-[153px] border border-[#9a9da5] rounded-[2px] bg-[linear-gradient(90deg,#ffffff,#f2f2ef_50%,#cfd1d8)] flex flex-col items-center justify-center gap-[2px]">
      <span class="w-[8px] h-px bg-[#888]"></span><span class="w-[8px] h-px bg-[#888]"></span><span class="w-[8px] h-px bg-[#888]"></span><span class="w-[8px] h-px bg-[#888]"></span>
    </div>
    <div class="flex-1"></div>
    <svg width="10" height="5" viewBox="0 0 10 5"><path d="M0 0H10L5 5Z" fill="#6d7079"/></svg>
    <div class="mt-[6px] w-[13px] h-[45px] bg-[#a3a6ae] flex flex-col items-center justify-between py-[5px] text-[9px] leading-none text-black">
      <svg width="8" height="8" viewBox="0 0 8 8"><path d="M1 0H7M1 4H7L4 1Z M1 7H7" stroke="#222" fill="#222"/></svg>
      <svg width="9" height="9" viewBox="0 0 9 9"><circle cx="4.5" cy="4.5" r="3.5" fill="#d8dade" stroke="#444"/></svg>
      <svg width="8" height="8" viewBox="0 0 8 8"><path d="M1 1H7M1 4H7L4 7Z M1 7.5H7" stroke="#222" fill="#222"/></svg>
    </div>
  </aside>
</main>

<!-- Status bar -->
<footer class="relative shrink-0 h-[22px] border-t border-[#d8d9dc] bg-[linear-gradient(#e0e1e4,#b7b9c0_45%,#a6a8b0_70%,#bdbfc6)] flex items-center font-['Liberation_Sans','Noto_Sans_CJK_SC',sans-serif] text-[12px] text-[#3e4047]">
  <span class="w-[69px] h-full pl-[9px] flex items-center border-r border-[#8d8f97]">页面: 1/8</span>
  <span class="w-[33px] h-full flex items-center justify-center border-r border-[#8d8f97]">
    <svg width="16" height="14" viewBox="0 0 16 14"><rect x="1" y="3" width="14" height="10" fill="#e9eef6" stroke="#7f93b4"/><rect x="1" y="3" width="14" height="3" fill="#6f8fbe"/><path d="M1 9H15M6 6V13M11 6V13" stroke="#7f93b4"/><circle cx="3.5" cy="3.5" r="3" fill="#e0492b"/></svg>
  </span>
</footer>

<!-- Watermark -->
<div class="absolute left-[1670px] top-[922px] w-[228px] flex flex-col items-center pointer-events-none">
  <span class="text-[58px] leading-[60px] h-[60px] font-black text-[#5a8200] scale-x-[1.3] [-webkit-text-stroke:5px_#ffff00] [paint-order:stroke_fill] font-['Noto_Sans_CJK_SC',sans-serif] whitespace-nowrap">课件站</span>
  <span class="-mt-[4px] text-[24px] leading-[21px] tracking-[1.7px] font-bold text-[#b05c00] [-webkit-text-stroke:3px_#ffffff] [paint-order:stroke_fill] font-['Liberation_Sans',sans-serif] whitespace-nowrap">www.kjzhan.com</span>
</div>

</body>
</html>
